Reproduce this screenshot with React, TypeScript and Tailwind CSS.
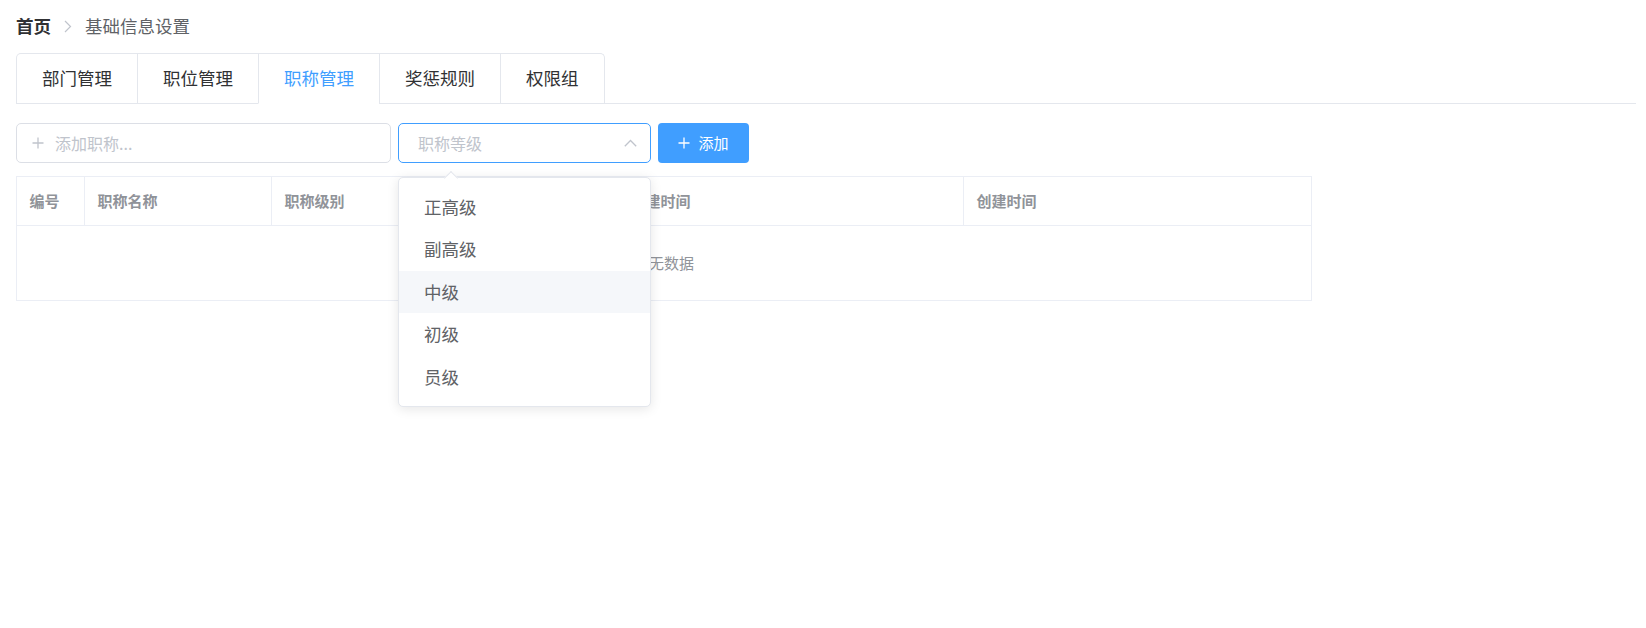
import React from 'react';

const FONT = { fontFamily: '"Noto Sans CJK SC", "Liberation Sans", sans-serif' };

const tabs = ['部门管理', '职位管理', '职称管理', '奖惩规则', '权限组'];
const levels = ['正高级', '副高级', '中级', '初级', '员级'];
const columns = [
  { label: '编号', w: 'w-[68px]' },
  { label: '职称名称', w: 'w-[187px]' },
  { label: '职称级别', w: 'w-[346px]' },
  { label: '创建时间', w: 'w-[346px]' },
  { label: '创建时间', w: 'flex-1' },
];

const PlusIcon: React.FC<{ className?: string }> = ({ className }) => (
  <svg className={className} viewBox="0 0 12 12" fill="none" stroke="currentColor" strokeWidth="1.3">
    <path d="M6 0.5v11M0.5 6h11" />
  </svg>
);

export default function App() {
  return (
    <div className="min-h-[628px] bg-white pl-4 pr-[10px] pt-[17px]" style={FONT}>
      {/* breadcrumb */}
      <div className="flex items-center text-[17.5px] leading-[18px]">
        <span className="font-bold text-[#303133]">首页</span>
        <svg className="mx-[13px] h-[13px] w-[8px] text-[#C0C4CC]" viewBox="0 0 8 13" fill="none" stroke="currentColor" strokeWidth="1.2">
          <path d="M1 1l5.5 5.5L1 12" />
        </svg>
        <span className="text-[#606266]">基础信息设置</span>
      </div>

      {/* tabs */}
      <div className="mt-[18px] flex border-b border-[#E4E7ED]">
        <div className="-mb-px flex rounded-t-[5px] border border-b-0 border-[#E4E7ED]">
          {tabs.map((t, i) => (
            <div
              key={t}
              className={`flex h-[50px] items-center border-b px-[25px] text-[17.5px] ${i > 0 ? 'border-l border-l-[#E4E7ED]' : ''} ${
                i === 2 ? 'border-b-white text-[#409EFF]' : 'border-b-[#E4E7ED] text-[#303133]'
              }`}
            >
              {t}
            </div>
          ))}
        </div>
      </div>

      {/* toolbar */}
      <div className="mt-[19px] flex items-center gap-[7px]">
        <div className="flex h-[40px] w-[375px] items-center rounded-[5px] border border-[#DCDFE6] pl-[15px]">
          <PlusIcon className="h-[12px] w-[12px] text-[#C0C4CC]" />
          <span className="ml-[11px] text-[16px] text-[#C0C4CC]">添加职称...</span>
        </div>
        <div className="relative">
          <div className="flex h-[40px] w-[253px] items-center justify-between rounded-[5px] border border-[#409EFF] pl-[19px] pr-[13px]">
            <span className="text-[16px] text-[#C0C4CC]">职称等级</span>
            <svg className="h-[8px] w-[13px] text-[#C0C4CC]" viewBox="0 0 13 8" fill="none" stroke="currentColor" strokeWidth="1.3">
              <path d="M0.8 7.2L6.5 1.5l5.7 5.7" />
            </svg>
          </div>
          {/* dropdown */}
          <div className="absolute left-0 top-[54px] z-10 w-[253px] rounded-[5px] border border-[#E4E7ED] bg-white py-[7.5px] shadow-[0_2px_12px_0_rgba(0,0,0,0.1)]">
            <div className="absolute -top-[5.5px] left-[47px] h-[10px] w-[10px] rotate-45 border-l border-t border-[#E4E7ED] bg-white" />
            {levels.map((l) => (
              <div
                key={l}
                className={`flex h-[42.5px] items-center px-[25px] text-[17.5px] text-[#606266] ${l === '中级' ? 'bg-[#F5F7FA]' : ''}`}
              >
                {l}
              </div>
            ))}
          </div>
        </div>
        <button className="flex h-[40px] w-[91px] items-center justify-center gap-[8px] rounded-[4px] bg-[#409EFF] text-[15px] text-white">
          <PlusIcon className="h-[12px] w-[12px]" />
          <span>添加</span>
        </button>
      </div>

      {/* table */}
      <div className="mt-[13px] w-[1296px] border border-[#EBEEF5]">
        <div className="flex h-[49px] border-b border-[#EBEEF5]">
          {columns.map((c, i) => (
            <div
              key={i}
              className={`flex items-center px-[12.5px] text-[15px] font-bold text-[#909399] ${c.w} ${
                i < columns.length - 1 ? 'border-r border-[#EBEEF5]' : ''
              }`}
            >
              {c.label}
            </div>
          ))}
        </div>
        <div className="flex h-[74px] items-center justify-center text-[15px] text-[#909399]">暂无数据</div>
      </div>
    </div>
  );
}
